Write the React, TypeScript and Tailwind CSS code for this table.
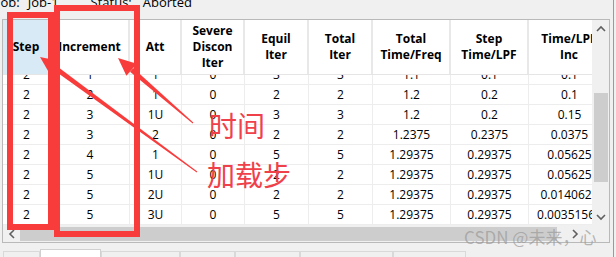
import React from "react";

const rows: string[][] = [
  ["2", "1", "1", "0", "3", "3", "1.1", "0.1", "0.1"],
  ["2", "2", "1", "0", "2", "2", "1.2", "0.2", "0.1"],
  ["2", "3", "1U", "0", "3", "3", "1.2", "0.2", "0.15"],
  ["2", "3", "2", "0", "2", "2", "1.2375", "0.2375", "0.0375"],
  ["2", "4", "1", "0", "5", "5", "1.29375", "0.29375", "0.05625"],
  ["2", "5", "1U", "0", "2", "2", "1.29375", "0.29375", "0.05625"],
  ["2", "5", "2U", "0", "2", "2", "1.29375", "0.29375", "0.0140625"],
  ["2", "5", "3U", "0", "5", "5", "1.29375", "0.29375", "0.00351562"],
];

const colW = [
  "w-[48px]",
  "w-[79px]",
  "w-[52px]",
  "w-[63px]",
  "w-[64px]",
  "w-[64px]",
  "w-[78px]",
  "w-[78px]",
  "w-[82px]",
];

const headers: string[][] = [
  ["Step"],
  ["Increment"],
  ["Att"],
  ["Severe", "Discon", "Iter"],
  ["Equil", "Iter"],
  ["Total", "Iter"],
  ["Total", "Time/Freq"],
  ["Step", "Time/LPF"],
  ["Time/LPF", "Inc"],
];

function Chevron({ dir }: { dir: "up" | "down" | "left" | "right" }) {
  const pts: Record<string, string> = {
    up: "1,6 5,2 9,6",
    down: "1,2 5,6 9,2",
    left: "6,1 2,5 6,9",
    right: "2,1 6,5 2,9",
  };
  const vert = dir === "up" || dir === "down";
  return (
    <svg width={vert ? 10 : 8} height={vert ? 8 : 10} viewBox={vert ? "0 0 10 8" : "0 0 8 10"}>
      <polyline points={pts[dir]} fill="none" stroke="#606060" strokeWidth="1.6" />
    </svg>
  );
}

const tabs = [
  { w: "w-[37px]", active: false },
  { w: "w-[61px]", active: true },
  { w: "w-[79px]", active: false },
  { w: "w-[55px]", active: false },
  { w: "w-[65px]", active: false },
  { w: "w-[93px]", active: false },
  { w: "w-[73px]", active: false },
];

export default function App() {
  return (
    <div className="relative w-[616px] h-[257px] overflow-hidden bg-[#f0f0f0] text-black font-['Open_Sans',sans-serif] flex">
      <div className="w-[613px] flex flex-col">
        {/* title line */}
        <div className="h-[19px] overflow-hidden">
          <div className="-mt-[7px] flex text-[13px] leading-[18px] whitespace-nowrap">
            <span className="-ml-[3px]">Job:</span>
            <span className="ml-[8px]">Job-1</span>
            <span className="ml-[32px]">Status:</span>
            <span className="ml-[11px]">Aborted</span>
          </div>
        </div>

        {/* table frame */}
        <div className="ml-[2px] w-[608px] h-[224px] border border-[#b9b9b9] bg-white flex flex-col">
          <div className="flex h-[205px]">
            <div className="w-[589px] overflow-hidden flex flex-col">
              {/* header */}
              <div className="flex w-[608px] h-[55px] shrink-0 border-b border-[#e5e5e5]">
                {headers.map((h, i) => (
                  <div
                    key={i}
                    className={`${colW[i]} shrink-0 h-full flex flex-col items-center justify-center text-[12px] leading-[16px] font-bold border-r-2 border-[#e8e8e8] ${
                      i === 0 ? "bg-[#d9eaf7]" : "bg-white"
                    }`}
                  >
                    {h.map((l, j) => (
                      <span key={j} className="whitespace-nowrap">
                        {l}
                      </span>
                    ))}
                  </div>
                ))}
              </div>
              {/* rows */}
              <div className="h-[150px] overflow-hidden">
                <div className="-mt-[10px] w-[608px]">
                  {rows.map((r, ri) => (
                    <div key={ri} className="flex h-[20px] border-b border-[#ededed]">
                      {r.map((c, ci) => (
                        <div
                          key={ci}
                          className={`${colW[ci]} shrink-0 h-full flex items-center justify-center text-[12px] leading-none whitespace-nowrap overflow-hidden border-r border-[#ededed]`}
                        >
                          {c}
                        </div>
                      ))}
                    </div>
                  ))}
                </div>
              </div>
            </div>
            {/* vertical scrollbar */}
            <div className="w-[17px] bg-[#f0f0f0] flex flex-col items-center">
              <div className="h-[17px] flex items-center justify-center">
                <Chevron dir="up" />
              </div>
              <div className="h-[56px]" />
              <div className="h-[89px] w-[14px] bg-[#cdcdcd]" />
              <div className="flex-1" />
              <div className="h-[17px] flex items-center justify-center">
                <Chevron dir="down" />
              </div>
            </div>
          </div>
          {/* horizontal scrollbar */}
          <div className="flex h-[17px]">
            <div className="w-[589px] bg-[#f0f0f0] flex items-center">
              <div className="w-[17px] flex items-center justify-center">
                <Chevron dir="left" />
              </div>
              <div className="w-[537px] h-[14px] bg-[#cdcdcd]" />
              <div className="flex-1 flex items-center justify-center">
                <Chevron dir="right" />
              </div>
            </div>
            <div className="w-[17px] bg-[#f0f0f0]" />
          </div>
        </div>

        {/* tabs */}
        <div className="ml-[3px] mt-[6px] flex items-end h-[8px]">
          {tabs.map((t, i) => (
            <div
              key={i}
              className={`${t.w} shrink-0 border-t border-l border-r ${
                t.active ? "h-[8px] bg-white border-[#d0d0d0]" : "h-[6px] bg-[#f0f0f0] border-[#d9d9d9]"
              }`}
            />
          ))}
        </div>
      </div>
      <div className="w-px h-full bg-[#9a9a9a]" />

      {/* annotation overlays */}
      <div className="absolute left-[7px] top-[12px] w-[47px] h-[218px] border-[6px] border-[#f83c3c]" />
      <div className="absolute left-[54px] top-[5px] w-[86px] h-[232px] border-[6px] border-[#f83c3c]" />
      <svg className="absolute left-0 top-0 pointer-events-none" width="616" height="257" viewBox="0 0 616 257">
        <polygon points="193.3,122.6 192.7,123.4 130.0,71.7 133.2,67.9" fill="#f83c3c" />
        <polygon points="118,58 136.8,63.8 126.4,75.8" fill="#f83c3c" />
        <polygon points="197.3,171.6 196.7,172.4 53.0,69.6 56.0,65.6" fill="#f83c3c" />
        <polygon points="40,57 59.2,61.1 49.8,74.1" fill="#f83c3c" />
      </svg>
      <div className="absolute left-[209px] top-[109px] text-[28px] leading-[32px] text-[#f0404a] font-['Noto_Sans_CJK_SC',sans-serif] whitespace-nowrap">
        时间
      </div>
      <div className="absolute left-[207px] top-[158px] text-[28px] leading-[32px] text-[#f0404a] font-['Noto_Sans_CJK_SC',sans-serif] whitespace-nowrap">
        加载步
      </div>
      <div className="absolute left-[464px] top-[226px] text-[17px] leading-[22px] text-[#9a9a9a]/70 font-['Noto_Sans_CJK_SC',sans-serif] whitespace-nowrap">
        CSDN @未来，心
      </div>
    </div>
  );
}
